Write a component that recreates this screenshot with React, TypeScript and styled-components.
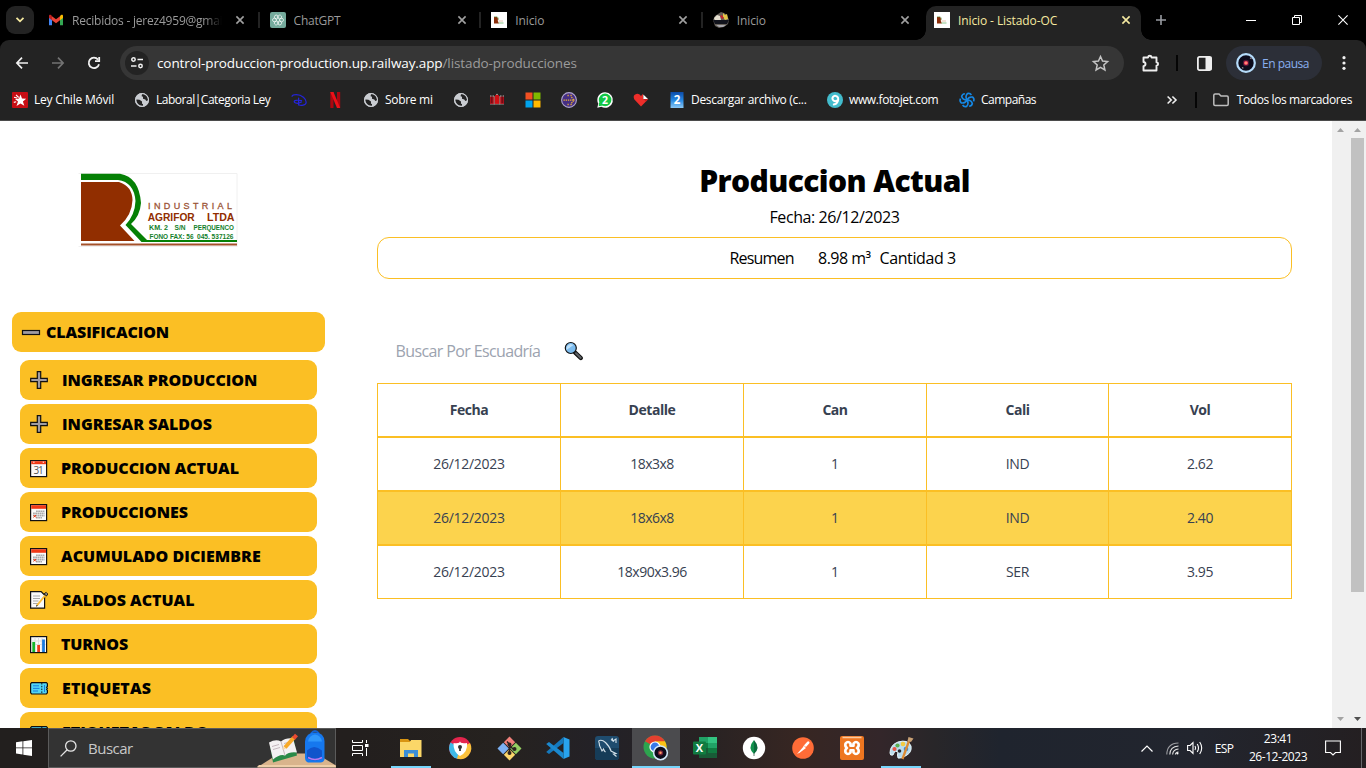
import React from "react";
import styled, { createGlobalStyle, css } from "styled-components";

const GlobalStyle = createGlobalStyle`
  * { box-sizing: border-box; }
  html, body { margin: 0; padding: 0; overflow: hidden; background: #fff; }
  body { font-family: "Open Sans", "Noto Sans", sans-serif; font-size: 12px; color: #000; }
  svg { display: block; flex: none; overflow: visible; }
`;

const Screen = styled.div`
  width: 1366px;
  height: 768px;
  display: flex;
  flex-direction: column;
  overflow: hidden;
`;

const Label = styled.span<{ $track?: number }>`
  white-space: nowrap;
  letter-spacing: ${(p) => p.$track ?? 0}px;
`;

/* ---------- Tab strip ---------- */

const TabStrip = styled.div`
  height: 40px;
  flex: none;
  display: flex;
  background: #000;
  padding-left: 6px;
`;

const TabSearch = styled.div`
  width: 28px;
  height: 28px;
  margin: 6px 4px 0 0;
  border-radius: 9px;
  background: #232323;
  display: flex;
  align-items: center;
  justify-content: center;
`;

const Tab = styled.div<{ $line?: boolean }>`
  width: 221.6px;
  flex: none;
  height: 28px;
  margin-top: 6px;
  padding-left: 10px;
  display: flex;
  align-items: center;
  color: #9a9a9a;
  position: relative;
  ${(p) =>
    p.$line &&
    css`
      &::after {
        content: "";
        position: absolute;
        right: 0;
        top: 6px;
        width: 2px;
        height: 16px;
        background: #232323;
      }
    `}
`;

const ActiveTab = styled(Tab)`
  width: 215px;
  height: 34px;
  margin-left: 1.600px;
  padding: 0 0 6px 8px;
  background: #232323;
  color: #f5e9a0;
  border-radius: 10px 10px 0 0;
  &::before, &::after {
    content: "";
    position: absolute;
    bottom: 0;
    width: 10px;
    height: 10px;
  }
  &::before {
    left: -10px;
    background: radial-gradient(circle at 0 0, transparent 9.5px, #232323 10px);
  }
  &::after {
    right: -10px;
    background: radial-gradient(circle at 100% 0, transparent 9.5px, #232323 10px);
  }
`;

const TabTitle = styled.div<{ $fade?: boolean }>`
  width: 150px;
  margin-left: 8px;
  padding-top: 1px;
  overflow: hidden;
  line-height: 18px;
  ${(p) => p.$fade && css`-webkit-mask-image: linear-gradient(90deg, #000 132px, transparent 150px);`}
`;

const TabClose = styled.div`
  width: 16px;
  margin-left: 10px;
  display: flex;
  justify-content: center;
`;

const NewTab = styled.div`
  width: 40px;
  display: flex;
  align-items: center;
  justify-content: center;
`;

const WindowButtons = styled.div`
  margin-left: auto;
  display: flex;
`;

const WindowButton = styled.div`
  width: 46px;
  height: 40px;
  display: flex;
  align-items: center;
  justify-content: center;
`;

/* ---------- Toolbar ---------- */

const ToolbarBack = styled.div`
  flex: none;
  height: 81px;
  background: #000;
`;

const ToolbarArea = styled.div`
  height: 81px;
  background: #232323;
  border-radius: 9px 9px 0 0;
  border-bottom: 1px solid #4b4b4b;
`;

const Toolbar = styled.div`
  height: 46px;
  display: flex;
  align-items: center;
  padding-left: 4px;
`;

const ToolButton = styled.div<{ $w?: number; $shift?: number }>`
  width: ${(p) => p.$w ?? 36}px;
  padding-left: ${(p) => p.$shift ?? 0}px;
  display: flex;
  align-items: center;
  justify-content: center;
`;

const Omnibox = styled.div`
  width: 1004px;
  height: 34px;
  margin-left: 8px;
  border-radius: 17px;
  background: #363636;
  display: flex;
  align-items: center;
  padding: 0 15px 0 5px;
`;

const SiteInfo = styled.div`
  width: 24px;
  height: 24px;
  border-radius: 50%;
  background: #232323;
  display: flex;
  align-items: center;
  justify-content: center;
  margin-right: 8px;
`;

const Url = styled.div`
  flex: 1;
  font-size: 13.5px;
  line-height: 20px;
  color: #fff;
`;

const UrlPath = styled.span`
  color: #9b9b9b;
`;

const Divider = styled.div<{ $h?: number }>`
  width: 2px;
  height: ${(p) => p.$h ?? 16}px;
  background: #050505;
`;

const ProfileChip = styled.div`
  width: 96px;
  height: 34px;
  margin-left: 3px;
  border-radius: 17px;
  background: #2c2f38;
  color: #8ab0f0;
  display: flex;
  align-items: center;
  gap: 6px;
  padding-left: 10px;
`;

const BookmarkBar = styled.div`
  height: 28px;
  display: flex;
  align-items: center;
  padding-left: 12px;
  color: #fff;
`;

const Bookmark = styled.div<{ $w: number }>`
  width: ${(p) => p.$w}px;
  display: flex;
  align-items: center;
  gap: 6px;
  line-height: 18px;
`;

const BookmarkEnd = styled.div`
  margin-left: auto;
  padding-right: 14px;
  display: flex;
  align-items: center;
  line-height: 18px;
`;

const FolderIcon = styled.div`
  margin: 0 8px 0 16px;
`;

/* ---------- Page ---------- */

const Page = styled.div`
  flex: 1;
  min-height: 0;
  display: flex;
  overflow: hidden;
  background: #fff;
`;

const Sidebar = styled.div`
  width: 337px;
  flex: none;
  padding: 0 12px;
`;

const LogoBox = styled.div`
  height: 191px;
  padding: 52px 0 0 66px;
`;

const MenuHeader = styled.div`
  height: 40px;
  display: flex;
  align-items: center;
  gap: 5px;
  padding-left: 9px;
  border-radius: 9px;
  background: #fbbf24;
  font-weight: 800;
  font-size: 16px;
`;

const MenuList = styled.div`
  padding: 8px;
  display: flex;
  flex-direction: column;
  gap: 4px;
`;

const MenuItem = styled(MenuHeader)`
  flex: none;
  gap: 13px;
`;

const Main = styled.div`
  flex: 1;
  display: flex;
  flex-direction: column;
  align-items: center;
  padding: 37px 40px 0;
`;

const Title = styled.h1`
  margin: 0;
  height: 46px;
  line-height: 46px;
  font-size: 30px;
  font-weight: 800;
`;

const DateLine = styled.div`
  height: 33px;
  line-height: 26px;
  font-size: 16px;
`;

const Summary = styled.div`
  width: 915px;
  height: 42px;
  border: 1px solid #fbbf24;
  border-radius: 12px;
  display: flex;
  align-items: center;
  font-size: 16px;
  padding-left: 351.500px;
`;

const SummaryPart = styled.div<{ $w: number }>`
  width: ${(p) => p.$w}px;
`;

const SearchRow = styled.div`
  width: 915px;
  height: 40px;
  margin: 52px 0 12px;
  padding-left: 18.500px;
  display: flex;
  align-items: center;
  font-size: 16px;
  color: #9ca3af;
`;

const SearchField = styled.div`
  width: 168.500px;
`;

const Table = styled.div`
  width: 915px;
`;

const Row = styled.div<{ $head?: boolean; $hot?: boolean }>`
  height: 54px;
  display: grid;
  grid-template-columns: 182px 183px 183px 182px 183px;
  border: 1px solid #fbbf24;
  font-size: 14px;
  color: #374151;
  background: ${(p) => (p.$hot ? "#fcd34d" : "#fff")};
  font-weight: ${(p) => (p.$head ? 700 : 400)};
`;

const Cell = styled.div`
  display: flex;
  align-items: center;
  justify-content: center;
  padding-bottom: 2px;
  & + & {
    border-left: 1px solid #fbbf24;
  }
`;

const Scrollbar = styled.div`
  width: 17px;
  flex: none;
  background: #f0f0f0;
  display: flex;
  flex-direction: column;
  align-items: center;
  padding: 7px 0;
`;

const Thumb = styled.div`
  width: 13px;
  height: 454px;
  margin-top: 6px;
  background: #c1c1c1;
`;

const Grow = styled.div`
  flex: 1;
`;

/* ---------- Taskbar ---------- */

const Taskbar = styled.div`
  height: 40px;
  flex: none;
  display: flex;
  background: linear-gradient(90deg, #221f1e 0, #231f1e 360px, #26221f 500px, #232127 600px, #272223 700px, #372622 800px, #33262a 880px, #282629 935px, #1f242e 1000px, #22252e 1200px, #241f21 1366px);
  color: #fff;
`;

const StartButton = styled.div`
  width: 48px;
  display: flex;
  align-items: center;
  justify-content: center;
`;

const SearchBox = styled.div`
  width: 288px;
  height: 40px;
  display: flex;
  align-items: center;
  padding-left: 11px;
  background: #333;
  border: 1px solid #5b5b5b;
  color: #c8c8c8;
  font-size: 15px;
`;

const SearchHint = styled.div`
  width: 169px;
  margin-left: 11px;
`;

const TaskButton = styled.div<{ $open?: boolean; $focus?: boolean }>`
  width: 48px;
  height: 40px;
  margin-right: 1px;
  display: flex;
  align-items: center;
  justify-content: center;
  position: relative;
  background: ${(p) => (p.$focus ? "#4b4b4e" : "transparent")};
  &::after {
    content: "";
    display: ${(p) => (p.$open || p.$focus ? "block" : "none")};
    position: absolute;
    bottom: 0;
    height: 2px;
    left: ${(p) => (p.$focus ? 0 : 4)}px;
    right: ${(p) => (p.$focus ? 0 : 4)}px;
    background: #76d5fb;
  }
`;

const TaskView = styled(TaskButton)`
  margin-right: 3px;
`;

const Tray = styled.div`
  margin-left: auto;
  display: flex;
  align-items: center;
  height: 40px;
`;

const TraySlot = styled.div<{ $w: number }>`
  width: ${(p) => p.$w}px;
  display: flex;
  justify-content: center;
  align-items: center;
`;

const Clock = styled.div`
  width: 72px;
  display: flex;
  flex-direction: column;
  align-items: center;
  line-height: 18px;
  padding-bottom: 1px;
`;

const ShowDesktop = styled.div`
  width: 5px;
  height: 40px;
  border-left: 1px solid #66666a;
`;

/* ---------- Icons ---------- */

const Cross = ({ color, s = 8, w = 1.6 }: { color: string; s?: number; w?: number }) => (
  <svg width={s} height={s} viewBox={`0 0 ${s} ${s}`} stroke={color} strokeWidth={w}>
    <path d={`M.4 .4L${s - 0.4} ${s - 0.4}M${s - 0.4} .4L.4 ${s - 0.4}`} />
  </svg>
);

const Gmail = () => (
  <svg width="16" height="16" viewBox="0 0 16 16">
    <path d="M1 4v9.3h3V7z" fill="#4285f4" />
    <path d="M12 7v6.3h3V4z" fill="#34a853" />
    <path d="M12 4.2v4L15 6V4c0-1.6-1.7-2-3 .2z" fill="#fbbc04" />
    <path d="M4 4.2L8 7.3l4-3.1v4l-4 3-4-3z" fill="#ea4335" />
    <path d="M1 4c0-1.6 1.7-2 3 .2v4L1 6z" fill="#c5221f" />
  </svg>
);

const Knot = ({ color, w = 1.1 }: { color: string; w?: number }) => (
  <g fill="none" stroke={color} strokeWidth={w} strokeLinejoin="round">
    {[0, 60, 120, 180, 240, 300].map((a) => (
      <path key={a} transform={`rotate(${a} 8 8)`} d="M8 5.3V3.4a2.6 2.6 0 0 1 4.8-1.2 2.6 2.6 0 0 1 .2 2.6L10.4 6.500 8 5.200" />
    ))}
  </g>
);

const ChatGpt = () => (
  <svg width="16" height="16" viewBox="0 0 16 16">
    <rect width="16" height="16" rx="2" fill="#74aa9c" />
    <g transform="translate(2.400 2.400) scale(.7)"><Knot color="#fff" w={1} /></g>
  </svg>
);

const AgriforFavicon = () => (
  <svg width="16" height="16" viewBox="0 0 16 16">
    <rect width="16" height="16" fill="#fff" />
    <path d="M3 5h3q1.500 1 .8 4l1.200 2.600H3z" fill="#8b2e0a" />
    <path d="M3 4.800h3.200q1.500 1 1.300 3" fill="none" stroke="#5b9a45" strokeWidth=".6" />
    <path d="M7.500 9h4.500" stroke="#dfb5a0" strokeWidth=".8" />
    <path d="M7.500 11h5" stroke="#8bc58a" />
  </svg>
);

const TruckFavicon = () => (
  <svg width="16" height="16" viewBox="0 0 16 16">
    <path d="M0 8l2-4 3-2 3-2 3 1 3 2 2 5-1 4-4 3-5 1-4-2z" fill="#655f58" />
    <path d="M1 6l3-3 3 1 1 4-6 1z" fill="#e5dfcf" />
    <path d="M10 1l2 2 2-1 1 5-3 1-2-3z" fill="#e2c547" />
    <path d="M7 4l2-1 2 3-2 1z" fill="#c3242c" />
    <path d="M0 8h16l-2 4H2z" fill="#11131c" />
    <path d="M3 13h10l-3 2H6z" fill="#a6a6ad" />
  </svg>
);

const Globe = () => (
  <svg width="16" height="16" viewBox="0 0 16 16">
    <circle cx="8" cy="8" r="7" fill="#c9ccd1" />
    <path d="M2.4 7.6l3.1.2 2.5 1.6v2.3l1 .4v1.6Q4 14 2.4 9z" fill="#232323" />
    <path d="M8 2.2l-.4 2 1.4.6v2l2.3.8 1 1.5 1.8-.8Q13.8 3.4 9.400 2z" fill="#232323" />
    <circle cx="8" cy="8" r="6.500" fill="none" stroke="#c9ccd1" />
  </svg>
);

const LawStar = () => (
  <svg width="16" height="16" viewBox="0 0 16 16">
    <rect width="16" height="16" rx="1" fill="#c70d14" />
    <path d="M8.500 2.500l1.500 4 4.200.2-3.300 2.700 1.400 4.400-3.800-2.300-4 2.600L6 9.500 3 7l4-.4z" fill="#fff" />
    <path d="M2 5.200l3 .8M4 2.800l2.700 2.700M1.800 10.400l2.400-.6" stroke="#fff" strokeWidth="1.100" />
  </svg>
);

const Disney = () => (
  <svg width="16" height="16" viewBox="0 0 16 16" fill="none" stroke="#2424d8" strokeWidth="1.200" strokeLinecap="round">
    <path d="M1 4.200Q1.500 2.600 5.300 2.600C11 2.600 15.300 7 15.200 10.300 15 13.400 10 14 7.600 12.800" />
    <path d="M7.600 6.200v6.600" />
    <path d="M10.500 8.600Q3.200 7.600 3.200 9.600 3.500 11.200 7 11.400L10.500 10" />
  </svg>
);

const Netflix = () => (
  <svg width="16" height="16" viewBox="0 0 16 16">
    <path d="M3.300 0h3.200v16H3.300zM10 0h3.200v16H10z" fill="#ac0710" />
    <path d="M3.300 0h3.200L13.200 16H10z" fill="#ee1119" />
  </svg>
);

const RedHouse = () => (
  <svg width="16" height="16" viewBox="0 0 16 16">
    <path d="M1 4.500h4V12H1zM11 4.500h4V12h-4z" fill="#a80d18" />
    <path d="M5.600 12V5.200Q5.600 3 8 2.600q2.400.4 2.400 2.600V12z" fill="#cf0f14" />
    <path d="M5.200 4v8.500M10.800 4v8.500" stroke="#e8b9b0" strokeWidth=".6" />
    <path d="M1 4h1.500M3.500 4H5M11 4h1.500M13.700 4H15M7.200 2.400h1.600" stroke="#bcb0ac" />
    <path d="M1 12.300h14" stroke="#bcb0ac" strokeWidth=".5" />
    <path d="M2.800 5v6M13.200 5v6" stroke="#4a0c12" strokeWidth=".8" />
  </svg>
);

const Microsoft = () => (
  <svg width="16" height="16" viewBox="0 0 16 16">
    <path d="M.5 0.500h7v7h-7z" fill="#f25022" />
    <path d="M8.500 .5h7v7h-7z" fill="#7fba00" />
    <path d="M.5 8.500h7v7h-7z" fill="#00a4ef" />
    <path d="M8.500 8.500h7v7h-7z" fill="#ffb900" />
  </svg>
);

const DotsRound = () => (
  <svg width="16" height="16" viewBox="0 0 16 16">
    <circle cx="8" cy="8" r="7.400" fill="#452e83" stroke="#b0a6cd" strokeWidth="1.100" />
    <path d="M2.500 8.200H14M6.500 3.500h1.200M9.500 3.500h1.200M10.500 5.200l2.500 3-2.500 3M6.500 12.500h1.200M9.500 12.500h1.200" stroke="#f0b731" strokeWidth="1.300" strokeDasharray="1.300 .9" fill="none" />
  </svg>
);

const WhatsApp = () => (
  <svg width="16" height="16" viewBox="0 0 16 16">
    <path d="M8 .2a7.800 7.800 0 1 1-3.700 14.600L.3 15.800l1-4A7.800 7.800 0 0 1 8 .2z" fill="#fff" />
    <circle cx="8.100" cy="7.900" r="6.300" fill="#12c744" />
    <path d="M2.200 10l-.5 4.300 4-.7z" fill="#12c744" />
    <text x="8" y="11.800" textAnchor="middle" fontSize="10.500" fontWeight="700" fill="#fff">2</text>
  </svg>
);

const HeartCard = () => (
  <svg width="16" height="16" viewBox="0 0 16 16">
    <path d="M8 14.500L1.200 7.200Q-.5 3 3.300 2 6 1.300 8 4l2-2.300V7h5.400z" fill="#ed2e2a" />
    <path d="M10.300 2.400L15 7h-4.700z" fill="#fff" />
    <path d="M10.300 7H15l-2 2.400z" fill="#c41e1e" />
  </svg>
);

const TwoTile = () => (
  <svg width="16" height="16" viewBox="0 0 16 16">
    <defs>
      <linearGradient id="tile" x1="0" y1="0" x2="0" y2="1">
        <stop offset="0" stopColor="#0c4ba8" />
        <stop offset=".5" stopColor="#2487e2" />
        <stop offset="1" stopColor="#8ac8f5" />
      </linearGradient>
    </defs>
    <rect x="1.500" width="13" height="16" fill="url(#tile)" />
    <text x="8" y="12" textAnchor="middle" fontSize="11.500" fontWeight="700" fill="#fff">2</text>
  </svg>
);

const FotoJet = () => (
  <svg width="16" height="16" viewBox="0 0 16 16">
    <circle cx="8" cy="8" r="8" fill="#43bccd" />
    <path d="M10 8.200A2.600 2.600 0 1 1 9.500 4.200c3 1.600 2 8-3.600 8.400" fill="none" stroke="#fff" strokeWidth="1.900" />
  </svg>
);

const Campaign = () => (
  <svg width="16" height="16" viewBox="0 0 16 16" fill="none" stroke="#1588e5" strokeWidth="1.600">
    {[0, 60, 120, 180, 240, 300].map((a) => (
      <path key={a} transform={`rotate(${a} 8 8)`} d="M8 8Q5.800 4.300 8.400 1.600q2.600-.8 4 1.400" />
    ))}
  </svg>
);

const Avatar = ({ size = 20 }: { size?: number }) => (
  <svg width={size} height={size} viewBox="0 0 20 20">
    <circle cx="10" cy="10" r="8.800" fill="#0c0b1b" stroke="#b5dcfb" strokeWidth="2.200" />
    <circle cx="10" cy="10" r="3.200" fill="#4d1635" />
    <circle cx="10" cy="10" r="2.100" fill="#ff4c63" />
    <circle cx="10" cy="10" r=".8" fill="#ffd38a" />
    <path d="M14 4.800l1.500 1M6 14.500l1.400.8" stroke="#9a929c" strokeWidth="1.200" />
  </svg>
);

const AgriforLogo = () => (
  <svg width="160" height="75" viewBox="0 0 160 75" fontFamily="Liberation Sans, Arial, sans-serif" fontWeight="700">
    <path d="M.5 .5h158.500v73" fill="none" stroke="#f0f0f0" />
    <path d="M.5 73.500h159" stroke="#f0f0f0" />
    <path d="M3 9H41Q54 13 54.500 27 54 42 42 52.500L56.500 68H3z" fill="#912e00" />
    <path d="M3 .8H42Q61 4 63 30 62 43 53 51L69 67H159V69H63.500L47.500 52Q57 42 57.500 28 56 9 40 7H3z" fill="#058005" />
    <path d="M3 71.500H159" stroke="#a3512a" strokeWidth="2.200" />
    <text x="70" y="35.500" fontSize="9" fill="#9c5537" textLength="84" fontWeight="400" stroke="#9c5537" strokeWidth=".3">INDUSTRIAL</text>
    <text x="69.700" y="47.500" fontSize="11" fill="#912e00" textLength="47" lengthAdjust="spacingAndGlyphs">AGRIFOR</text>
    <text x="129" y="47.500" fontSize="11" fill="#912e00" textLength="27.500" lengthAdjust="spacingAndGlyphs">LTDA</text>
    <g fontSize="8" fill="#12802a">
      <text x="71" y="57" textLength="19" lengthAdjust="spacingAndGlyphs">KM. 2</text>
      <text x="96.500" y="57" textLength="11" lengthAdjust="spacingAndGlyphs">S/N</text>
      <text x="115.500" y="57" textLength="40.500" lengthAdjust="spacingAndGlyphs">PERQUENCO</text>
      <text x="71.500" y="65.800" textLength="44" lengthAdjust="spacingAndGlyphs">FONO FAX: 56</text>
      <text x="119" y="65.800" textLength="36.500" lengthAdjust="spacingAndGlyphs">045. 537126</text>
    </g>
  </svg>
);

const Minus = () => (
  <svg width="20" height="20" viewBox="0 0 20 20">
    <rect x="1.500" y="8.500" width="17" height="4" fill="#a09ca2" stroke="#111" strokeWidth="1.200" />
  </svg>
);

const Plus = () => (
  <svg width="20" height="20" viewBox="0 0 20 20">
    <path d="M8.300 1.700h3.400v6.600h6.600v3.400h-6.600v6.600H8.300v-6.600H1.700V8.300h6.600z" fill="#a09ca2" stroke="#111" strokeWidth="1.200" />
  </svg>
);

const Calendar31 = () => (
  <svg width="19" height="20" viewBox="0 -1 19 20">
    <rect x="1.600" y="1.600" width="16" height="16" fill="#fafafa" stroke="#111" strokeWidth="1.200" />
    <path d="M2.200 2.200h14.800v3H2.200z" fill="#f03a17" />
    <path d="M4.200 3.200h1.300M13.700 3.200H15" stroke="#fff" />
    <text x="9.600" y="14.800" textAnchor="middle" fontSize="10" fontWeight="400" fill="#555" textLength="10">31</text>
  </svg>
);

const CalendarGrid = () => (
  <svg width="19" height="20" viewBox="0 -1 19 20">
    <rect x="1.600" y="1.600" width="16" height="16" fill="#fafafa" stroke="#111" strokeWidth="1.200" />
    <path d="M2.200 2.200h14.800v3.600H2.200z" fill="#f03a17" />
    <path d="M7 8.200h8.500M4 10.400h11.500M4 12.600h11.500M7 14.800h6" stroke="#aaa" strokeWidth="1.600" strokeDasharray="1.800 .4" />
    <path d="M4.500 12l2.500 2.500M7 12l-2.500 2.500" stroke="#f03a17" />
  </svg>
);

const Memo = () => (
  <svg width="20" height="20" viewBox="0 0 20 20">
    <path d="M1.600 1.600h10.500l3.500 3.500v13H1.600z" fill="#fafafa" stroke="#111" strokeWidth="1.200" />
    <path d="M4 6h7M4 8.500h7M4 11h5.500M4 13.500h6" stroke="#a9a9a9" />
    <path d="M8 15.500L16 5.500" stroke="#fcbf3c" strokeWidth="2" />
    <path d="M7 16.800l.6-2 1.200 1z" fill="#111" />
    <path d="M15.200 3.800l2.300 2.200 1.200-2-1.500-1.600z" fill="#a09ca2" stroke="#111" />
  </svg>
);

const Chart = () => (
  <svg width="19" height="20" viewBox="0 -.5 19 20">
    <rect x="1.600" y="2.100" width="16" height="16" fill="#fafafa" stroke="#111" strokeWidth="1.200" />
    <path d="M6 3v14M9.500 3v14M13 3v14M2.500 6.500h14M2.500 10h14" stroke="#ddd" />
    <path d="M4.700 7.500v10" stroke="#16b52c" strokeWidth="2.800" />
    <path d="M9.600 10.500v7" stroke="#f03a17" strokeWidth="2.800" />
    <path d="M14.500 5v12.500" stroke="#1a7be0" strokeWidth="2.800" />
  </svg>
);

const Ticket = () => (
  <svg width="20" height="20" viewBox="0 0 20 20">
    <path d="M2.600 4.700H17.400l1 1v2.600l-.8 1 .8 1-.8 1 .8 1v2.500l-1 1.200H2.600l-1-1.200v-9z" fill="#50d5f5" stroke="#111" strokeWidth="1.200" />
    <path d="M12.800 5v11" stroke="#111" strokeDasharray="1.500 1.300" />
    <path d="M4 7.800h6M4 10.400h6.500M4 13h5M15.500 7v7" stroke="#1a7be0" strokeWidth="1" />
  </svg>
);

const Magnifier = () => (
  <svg width="20" height="20" viewBox="0 0 20 20">
    <path d="M11 11.500l5.800 5.500" stroke="#111" strokeWidth="4.400" strokeLinecap="round" />
    <path d="M12 12.300l4.600 4.500" stroke="#5d6064" strokeWidth="2.200" strokeLinecap="round" />
    <circle cx="6.800" cy="7" r="5.500" fill="#7cbcef" stroke="#111" strokeWidth="1.200" />
    <path d="M2.500 9q-.8-4.500 4-6l3 1z" fill="#bde0fa" />
  </svg>
);

const Arrow = ({ up, color }: { up?: boolean; color: string }) => (
  <svg width="7" height="4" viewBox="0 0 7 4">
    <path d={up ? "M3.500 0L7 4H0z" : "M0 0h7L3.500 4z"} fill={color} />
  </svg>
);

const Desk = () => (
  <svg width="79" height="38" viewBox="-1 -.5 79 38">
    <path d="M0 38L22 24H59L79 36v2z" fill="#d9b48c" />
    <path d="M0 37.500L2 35.500H78l1 2H0z" fill="#efcfa8" />
    <path d="M13 16l3 17 24-7-3-15z" fill="#2a8a48" />
    <path d="M12 13q7-4 12-1 5-4 12-3l4 14q-8-1-12 3-5-2-12 4z" fill="#f4f1f2" />
    <path d="M24 12l4 14M15 17l7-2M16 20l7-2M27 14l8-2" stroke="#b8a7ae" strokeWidth=".8" />
    <path d="M28 18l9-10" stroke="#f7a928" strokeWidth="4" />
    <path d="M36.500 9l3-3.500" stroke="#ea4a31" strokeWidth="4" />
    <path d="M25.500 20.500l1-3.500 2.500 2z" fill="#f6d7a5" />
    <path d="M54 4q4-5 8 0" fill="none" stroke="#1463d2" strokeWidth="1.800" />
    <path d="M48 28V12Q49 3 58 3t9.500 9v18q-1 3-4 3H51q-3-1-3-5z" fill="#1678ee" />
    <path d="M51 12q1-6 7-7 6 1 7 7z" fill="#2f97fa" />
    <path d="M50 21q7-7 15 0v8q-7 4-15 0z" fill="#1055cc" />
    <path d="M51 28q7 4 14 0" fill="none" stroke="#ba7bf0" strokeWidth="1.600" />
  </svg>
);

const Explorer = () => (
  <svg width="24" height="24" viewBox="0 0 24 24">
    <path d="M1 3h8l2 2h11v4H1z" fill="#d99512" />
    <path d="M1 6h10l1-2h10.500v17H1z" fill="#fbd768" />
    <path d="M5 21v-7h14v7h-4v-3.500H9V21z" fill="#3c8ed6" />
  </svg>
);

const Shield = () => (
  <svg width="24" height="24" viewBox="0 0 24 24">
    <circle cx="12" cy="12" r="11" fill="#e4254d" />
    <path d="M12 12L2.500 6.500A11 11 0 0 0 11 23z" fill="#3db9e8" />
    <path d="M12 12l10-5a11 11 0 0 1-13 15.600z" fill="#fbc23c" />
    <path d="M5.500 7q6.500 1 6.500-2 0 3 7 2 1 9-7 13Q5 16 5.500 7z" fill="#fff" />
    <circle cx="12" cy="11" r="2" fill="#343434" />
    <path d="M12 11v4" stroke="#343434" strokeWidth="1.800" />
  </svg>
);

const GitIcon = () => (
  <svg width="25" height="25" viewBox="0 0 25 25">
    <g transform="rotate(45 12.500 12.500)">
      <rect x="4" y="4" width="8" height="8" fill="#f2817b" />
      <rect x="13" y="4" width="8" height="8" fill="#95cf62" />
      <rect x="4" y="13" width="8" height="8" fill="#7cb0f2" />
      <rect x="13" y="13" width="8" height="8" fill="#fad66b" />
    </g>
    <path d="M10 5.500l2.500 3v9M12.500 10l5 4" stroke="#2c2320" strokeWidth="1.500" fill="none" />
    <circle cx="12.500" cy="8.500" r="2" fill="#2c2320" />
    <circle cx="12.500" cy="17" r="2" fill="#2c2320" />
    <circle cx="17.500" cy="13" r="2" fill="#2c2320" />
  </svg>
);

const Code = () => (
  <svg width="24" height="24" viewBox="0 0 24 24">
    <path d="M17.500 1L23.500 3.500v17L17.500 23z" fill="#28a3ee" />
    <path d="M17.500 1v6L3 18 .200 16z" fill="#1579bd" />
    <path d="M17.500 23v-6L3 6 .200 8z" fill="#1b89cf" />
  </svg>
);

const Dolphin = () => (
  <svg width="24" height="24" viewBox="0 0 24 24">
    <rect width="24" height="24" rx="3" fill="#1f4c6e" />
    <path d="M0 12h24v9q0 3-3 3H3q-3 0-3-3z" fill="#163c58" />
    <path d="M3.500 5q3-2 7 1.500Q15 11 16 15l5 2.500-2.500.5 3 2.500M3.500 5q1 2 1 4.500L7 15l1.500-2q.5 2 2 3M17 2l1 3 3-2v4M16 3.500l3 2" fill="none" stroke="#d5e2ea" strokeWidth="1.100" />
  </svg>
);

const ChromeIcon = () => (
  <svg width="26" height="26" viewBox="0 0 26 26">
    <circle cx="12" cy="12" r="11.500" fill="#2da44e" />
    <path d="M12 12L2 6.200A11.500 11.500 0 0 1 22 6.200z" fill="#e3402f" />
    <path d="M12 12V6.200h10A11.500 11.500 0 0 1 12 23.500L17 14z" fill="#fbc116" />
    <circle cx="12" cy="12" r="5.600" fill="#fff" />
    <circle cx="12" cy="12" r="4.400" fill="#3979e8" />
    <g transform="translate(9.700 10) scale(.78)">
      <circle cx="10" cy="10" r="8.800" fill="#0c0b1b" stroke="#d0e7fb" strokeWidth="2" />
      <circle cx="10" cy="10" r="3.400" fill="#74203a" />
      <circle cx="10" cy="10" r="1.600" fill="#ff9a64" />
    </g>
  </svg>
);

const Excel = () => (
  <svg width="24" height="24" viewBox="0 0 24 24">
    <path d="M6 1h9v10H6z" fill="#21a366" />
    <path d="M15 1h9v6h-9z" fill="#33c481" />
    <path d="M15 7h9v5h-9z" fill="#21a366" />
    <path d="M6 7h9v5H6z" fill="#107c41" />
    <path d="M15 12h9v5h-9z" fill="#107c41" />
    <path d="M6 12h9v10H6zM15 17h9v5h-9z" fill="#185c37" />
    <rect y="5.500" width="13" height="13" rx="1" fill="#107c41" />
    <text x="6.500" y="16" textAnchor="middle" fontSize="11" fontWeight="700" fill="#fff">X</text>
  </svg>
);

const Mongo = () => (
  <svg width="24" height="24" viewBox="0 0 24 24">
    <circle cx="12" cy="12" r="11.200" fill="#fff" />
    <path d="M12 4q-7 8 0 14z" fill="#10914d" />
    <path d="M12 4q7 8 0 14z" fill="#0a6a3c" />
    <path d="M12 17v3" stroke="#617b6c" />
  </svg>
);

const Postman = () => (
  <svg width="24" height="24" viewBox="0 0 24 24">
    <circle cx="12" cy="12" r="10.800" fill="#ff6c37" />
    <path d="M6 18l7-8 2 2-6 4.500z" fill="#fff" />
    <path d="M13.800 10.300l3.400-3.600" stroke="#fff" strokeWidth="2.600" strokeLinecap="round" />
    <path d="M13 9.500l2.500 2.500" stroke="#ff6c37" strokeWidth=".7" />
  </svg>
);

const Xampp = () => (
  <svg width="24" height="24" viewBox="0 0 24 24">
    <rect width="24" height="24" rx="2" fill="#ee7620" />
    <path d="M2.500 1.500h19" stroke="#f9c9a0" strokeWidth="1.500" />
    <path d="M5.500 7.500q2.500-3 5 0v2.300h3V7.500q2.500-3 5 0 .8 3-1.500 4.500 2.300 1.500 1.500 4.500-2.500 3-5 0v-2.300h-3v2.300q-2.500 3-5 0-.8-3 1.500-4.500-2.300-1.500-1.500-4.500z" fill="none" stroke="#fff" strokeWidth="2.600" strokeLinejoin="round" />
  </svg>
);

const Paint = () => (
  <svg width="25" height="25" viewBox="0 0 25 25">
    <path d="M1 17q0-8 8-11 10-3 13 4 1 6-4 9-5 4-9 3-1-3 0-6l-3-1-2 4q-3 1-3-2z" fill="#b9dcee" stroke="#e7f6fb" />
    <circle cx="5.500" cy="13" r="2.100" fill="#e85647" />
    <circle cx="8.500" cy="9.500" r="2.100" fill="#5caf50" />
    <circle cx="14" cy="8" r="2.300" fill="#f3cb42" />
    <circle cx="17" cy="13" r="2.300" fill="#3c88d2" />
    <circle cx="10.500" cy="15" r="1.800" fill="#23262e" />
    <path d="M13.500 23L20 5" stroke="#dc8b35" strokeWidth="2.300" />
    <path d="M18.500 5l1-4 5 1.500L22 6z" fill="#c9a175" />
  </svg>
);

/* ---------- Data ---------- */

const bookmarks: { w: number; icon: React.ReactNode; text?: string; track?: number }[] = [
  { w: 122, icon: <LawStar />, text: "Ley Chile Móvil", track: -0.2 },
  { w: 157, icon: <Globe />, text: "Laboral|Categoria Ley", track: -0.48 },
  { w: 36, icon: <Disney /> },
  { w: 36, icon: <Netflix /> },
  { w: 90, icon: <Globe />, text: "Sobre mi", track: -0.3 },
  { w: 36, icon: <Globe /> },
  { w: 36, icon: <RedHouse /> },
  { w: 36, icon: <Microsoft /> },
  { w: 36, icon: <DotsRound /> },
  { w: 36, icon: <WhatsApp /> },
  { w: 36, icon: <HeartCard /> },
  { w: 158, icon: <TwoTile />, text: "Descargar archivo (c...", track: -0.3 },
  { w: 132, icon: <FotoJet />, text: "www.fotojet.com", track: -0.39 },
  { w: 90, icon: <Campaign />, text: "Campañas", track: -0.5 },
];

const menu: { icon: React.ReactNode; text: string; track: number }[] = [
  { icon: <Plus />, text: "INGRESAR PRODUCCION", track: -0.05 },
  { icon: <Plus />, text: "INGRESAR SALDOS", track: 0 },
  { icon: <Calendar31 />, text: "PRODUCCION ACTUAL", track: -0.04 },
  { icon: <CalendarGrid />, text: "PRODUCCIONES", track: -0.1 },
  { icon: <CalendarGrid />, text: "ACUMULADO DICIEMBRE", track: 0.03 },
  { icon: <Memo />, text: "SALDOS ACTUAL", track: 0 },
  { icon: <Chart />, text: "TURNOS", track: -0.1 },
  { icon: <Ticket />, text: "ETIQUETAS", track: 0.15 },
  { icon: <Ticket />, text: "ETIQUETAS SALDO", track: 0 },
];

const rows = [
  ["26/12/2023", "18x3x8", "1", "IND", "2.62"],
  ["26/12/2023", "18x6x8", "1", "IND", "2.40"],
  ["26/12/2023", "18x90x3.96", "1", "SER", "3.95"],
];

const rowTracking = [-0.3, -0.5, 0, -0.3, -0.4];

const tabs = [
  { icon: <Gmail />, title: "Recibidos - jerez4959@gmail.com", fade: true, track: -0.22 },
  { icon: <ChatGpt />, title: "ChatGPT", track: -0.25 },
  { icon: <AgriforFavicon />, title: "Inicio", track: -0.1 },
  { icon: <TruckFavicon />, title: "Inicio", track: -0.1 },
];

/* ---------- Sections ---------- */

const Browser = () => (
  <>
    <TabStrip>
      <TabSearch>
        <svg width="8" height="6" viewBox="0 0 8 6" fill="none" stroke="#f5e9a0" strokeWidth="1.800">
          <path d="M.5 .8L4 4.300 7.500 .8" />
        </svg>
      </TabSearch>
      {tabs.map((t, i) => (
        <Tab key={i} $line={i < 3}>
          {t.icon}
          <TabTitle $fade={t.fade}><Label $track={t.track}>{t.title}</Label></TabTitle>
          <TabClose><Cross color="#a0a0a0" /></TabClose>
        </Tab>
      ))}
      <ActiveTab>
        <AgriforFavicon />
        <TabTitle><Label $track={-0.1}>Inicio - Listado-OC</Label></TabTitle>
        <TabClose><Cross color="#f5e9a0" /></TabClose>
      </ActiveTab>
      <NewTab>
        <svg width="10" height="10" viewBox="0 0 10 10" stroke="#989ba1" strokeWidth="1.600"><path d="M5 0v10M0 5h10" /></svg>
      </NewTab>
      <WindowButtons>
        <WindowButton>
          <svg width="10" height="10" viewBox="0 0 10 10" stroke="#fff"><path d="M0 5.500h10" /></svg>
        </WindowButton>
        <WindowButton>
          <svg width="10" height="10" viewBox="0 0 10 10" stroke="#fff" fill="none"><path d="M.5 2.500h7v7h-7zM2.500 2.500v-2h7v7h-2" /></svg>
        </WindowButton>
        <WindowButton><Cross color="#fff" s={10} w={1.1} /></WindowButton>
      </WindowButtons>
    </TabStrip>
    <ToolbarBack>
      <ToolbarArea>
        <Toolbar>
          <ToolButton>
            <svg width="12" height="12" viewBox="0 0 12 12" fill="none" stroke="#f1f1f1" strokeWidth="1.700"><path d="M12 6H1.200M6 .7L.9 6 6 11.300" /></svg>
          </ToolButton>
          <ToolButton>
            <svg width="12" height="12" viewBox="0 0 12 12" fill="none" stroke="#737373" strokeWidth="1.700"><path d="M0 6h10.800M6 .7L11.100 6 6 11.300" /></svg>
          </ToolButton>
          <ToolButton>
            <svg width="12" height="12" viewBox="0 0 12 12" fill="none" stroke="#f1f1f1" strokeWidth="1.800"><path d="M11 7.200A5.200 5.200 0 1 1 10 2.600" /><path d="M11.200 0v4.200H7" /></svg>
          </ToolButton>
          <Omnibox>
            <SiteInfo>
              <svg width="12" height="12" viewBox="0 0 12 12" fill="none" stroke="#f1f1f1" strokeWidth="1.500">
                <circle cx="2.500" cy="2.500" r="1.700" /><path d="M6.500 2.500H12M0 9h5.500" /><circle cx="9.500" cy="9" r="1.700" />
              </svg>
            </SiteInfo>
            <Url><Label $track={-0.1}>control-produccion-production.up.railway.app<UrlPath>/listado-producciones</UrlPath></Label></Url>
            <svg width="17" height="17" viewBox="0 0 17 17" fill="none" stroke="#c4c4c4" strokeWidth="1.500">
              <path d="M8.500 1.500l2.050 4.600 5 .5-3.750 3.350 1.100 4.950-4.400-2.600-4.400 2.600 1.100-4.950L1.450 6.600l5-.5z" />
            </svg>
          </Omnibox>
          <ToolButton $w={52}>
            <svg width="17" height="17" viewBox="0 0 17 17" fill="none" stroke="#eee" strokeWidth="1.900" strokeLinejoin="round">
              <path d="M1.500 2.500H6q.3-1.700 1.800-1.700T9.600 2.500h4.900v4.700q1.600.2 1.600 1.700t-1.600 1.700v4.900h-13v-4.400q2-.3 2-2.100T1.500 7z" />
            </svg>
          </ToolButton>
          <Divider />
          <ToolButton $w={45} $shift={7}>
            <svg width="15" height="15" viewBox="0 0 15 15"><rect x=".9" y=".9" width="13.200" height="13.200" rx="1.500" fill="none" stroke="#eee" strokeWidth="1.800" /><path d="M8.500 1h6v13h-6z" fill="#eee" /></svg>
          </ToolButton>
          <ProfileChip>
            <Avatar />
            <Label $track={-0.5}>En pausa</Label>
          </ProfileChip>
          <ToolButton $w={43}>
            <svg width="4" height="14" viewBox="0 0 4 14" fill="#f1f1f1"><circle cx="2" cy="1.700" r="1.600" /><circle cx="2" cy="7" r="1.600" /><circle cx="2" cy="12.300" r="1.600" /></svg>
          </ToolButton>
        </Toolbar>
        <BookmarkBar>
          {bookmarks.map((b, i) => (
            <Bookmark key={i} $w={b.w}>
              {b.icon}
              {b.text && <Label $track={b.track}>{b.text}</Label>}
            </Bookmark>
          ))}
          <BookmarkEnd>
            <ToolButton $w={45}>
              <svg width="10" height="8" viewBox="0 0 10 8" fill="none" stroke="#eee" strokeWidth="1.600"><path d="M.6 .5L4.200 4 .6 7.500M5.400 .5L9 4 5.400 7.500" /></svg>
            </ToolButton>
            <Divider />
            <FolderIcon>
              <svg width="16" height="14" viewBox="0 0 16 14" fill="none" stroke="#bdbdbd" strokeWidth="1.500"><path d="M.8 2.300q0-1.300 1.300-1.300H6l2 2h6q1.200 0 1.200 1.200v7q0 1.200-1.200 1.200H2Q.8 12.400.8 11.200z" /></svg>
            </FolderIcon>
            <Label $track={-0.41}>Todos los marcadores</Label>
          </BookmarkEnd>
        </BookmarkBar>
      </ToolbarArea>
    </ToolbarBack>
  </>
);

const Content = () => (
  <Page>
    <Sidebar>
      <LogoBox><AgriforLogo /></LogoBox>
      <MenuHeader><Minus /><Label $track={-0.1}>CLASIFICACION</Label></MenuHeader>
      <MenuList>
        {menu.map((m) => (
          <MenuItem key={m.text}>{m.icon}<Label $track={m.track}>{m.text}</Label></MenuItem>
        ))}
      </MenuList>
    </Sidebar>
    <Main>
      <Title><Label $track={-0.6}>Produccion Actual</Label></Title>
      <DateLine><Label $track={-0.4}>Fecha: 26/12/2023</Label></DateLine>
      <Summary>
        <SummaryPart $w={88.5}><Label $track={-0.8}>Resumen</Label></SummaryPart>
        <SummaryPart $w={61.5}><Label $track={-0.5}>8.98 m³</Label></SummaryPart>
        <Label $track={-0.4}>Cantidad 3</Label>
      </Summary>
      <SearchRow>
        <SearchField><Label $track={-0.62}>Buscar Por Escuadría</Label></SearchField>
        <Magnifier />
      </SearchRow>
      <Table>
        <Row $head>
          {["Fecha", "Detalle", "Can", "Cali", "Vol"].map((h) => <Cell key={h}><Label $track={-0.45}>{h}</Label></Cell>)}
        </Row>
        {rows.map((r, i) => (
          <Row key={i} $hot={i === 1}>
            {r.map((c, j) => <Cell key={j}><Label $track={rowTracking[j]}>{c}</Label></Cell>)}
          </Row>
        ))}
      </Table>
    </Main>
    <Scrollbar>
      <Arrow up color="#a3a3a3" />
      <Grow />
      <Arrow color="#a3a3a3" />
    </Scrollbar>
    <Scrollbar>
      <Arrow up color="#a3a3a3" />
      <Thumb />
      <Grow />
      <Arrow color="#505050" />
    </Scrollbar>
  </Page>
);

const WindowsBar = () => (
  <Taskbar>
    <StartButton>
      <svg width="16" height="16" viewBox="0 0 16 16" fill="#fff"><path d="M0 2.200L6.500 1.300v6.200H0zM7.300 1.200L16 0v7.500H7.300zM0 8.300h6.500v6.200L0 13.600zM7.300 8.300H16V16l-8.700-1.300z" /></svg>
    </StartButton>
    <SearchBox>
      <svg width="17" height="17" viewBox="0 0 17 17" fill="none" stroke="#e5e5e5" strokeWidth="1.300"><circle cx="10.800" cy="6" r="5.200" /><path d="M7.200 9.800L.6 16.400" /></svg>
      <SearchHint><Label $track={-0.5}>Buscar</Label></SearchHint>
      <Desk />
    </SearchBox>
    <TaskView>
      <svg width="17" height="16" viewBox="0 0 17 16" fill="none" stroke="#fff"><path d="M.5 0v2.500h10V0M.5 5.500h10v5H.5zM.5 16v-2.500h10V16M14.500 0v3M14.500 8v8" /><path d="M13 4h3.500v3H13z" fill="#fff" stroke="none" /></svg>
    </TaskView>
    <TaskButton $open><Explorer /></TaskButton>
    <TaskButton><Shield /></TaskButton>
    <TaskButton><GitIcon /></TaskButton>
    <TaskButton><Code /></TaskButton>
    <TaskButton><Dolphin /></TaskButton>
    <TaskButton $focus><ChromeIcon /></TaskButton>
    <TaskButton><Excel /></TaskButton>
    <TaskButton><Mongo /></TaskButton>
    <TaskButton><Postman /></TaskButton>
    <TaskButton><Xampp /></TaskButton>
    <TaskButton $open><Paint /></TaskButton>
    <Tray>
      <TraySlot $w={26}>
        <svg width="12" height="7" viewBox="0 0 12 7" fill="none" stroke="#fff" strokeWidth="1.200"><path d="M.5 6.500L6 1l5.500 5.500" /></svg>
      </TraySlot>
      <TraySlot $w={24}>
        <svg width="13" height="13" viewBox="0 0 13 13" fill="none" stroke="#e2e2e2" strokeWidth="1.100">
          <path d="M.8 12.500Q1 1.300 12.500 1" stroke="#9b9ca0" /><path d="M3.800 12.500Q4 4.500 12.500 4M6.600 12.500Q7 7.500 12.500 7M9.400 12.500Q9.600 10.300 12.500 10" /><circle cx="11.500" cy="11.500" r="1" fill="#fff" stroke="none" />
        </svg>
      </TraySlot>
      <TraySlot $w={22}>
        <svg width="16" height="14" viewBox="0 0 16 14" fill="none" stroke="#fff" strokeWidth="1.100"><path d="M.6 4.500h2.500L6 1.500v11L3.100 9.500H.6zM8 5q1.300 2 0 4M10.200 3q2.600 4 0 8M12.700 1q4 6 0 12" /></svg>
      </TraySlot>
      <TraySlot $w={36}><Label $track={-0.6}>ESP</Label></TraySlot>
      <Clock><Label $track={-0.45}>23:41</Label><Label $track={-0.45}>26-12-2023</Label></Clock>
      <TraySlot $w={37}>
        <svg width="16" height="16" viewBox="0 0 16 16" fill="none" stroke="#fff" strokeWidth="1.100"><path d="M.6 1h14.800v11.500H10.500L8 15l-2.500-2.500H.6z" /></svg>
      </TraySlot>
      <TraySlot $w={10} />
      <ShowDesktop />
    </Tray>
  </Taskbar>
);

export default function App() {
  return (
    <Screen>
      <GlobalStyle />
      <Browser />
      <Content />
      <WindowsBar />
    </Screen>
  );
}
